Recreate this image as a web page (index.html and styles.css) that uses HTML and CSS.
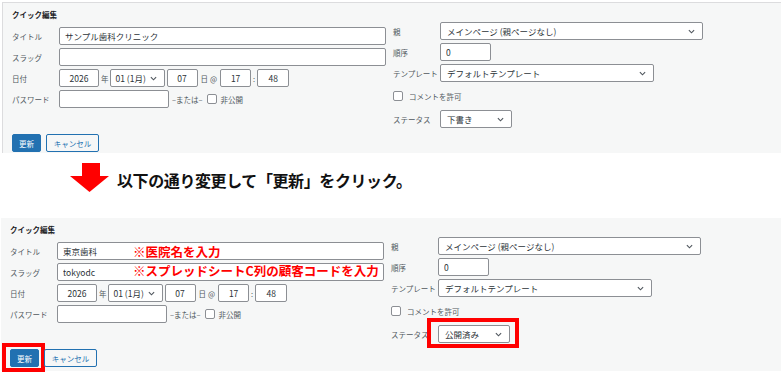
FILE: index.html
```html
<!DOCTYPE html>
<html lang="ja">
<head>
<meta charset="utf-8">
<title>クイック編集</title>
<link rel="stylesheet" href="styles.css">
</head>
<body>

<!-- 変更前 -->
<div class="qe">
  <div class="qe-cols">
    <div class="col-left">
      <h2 class="qe-title">クイック編集</h2>
      <div class="row"><span class="lbl">タイトル</span><input class="txt w-title" value="サンプル歯科クリニック"></div>
      <div class="row"><span class="lbl">スラッグ</span><input class="txt w-title" value=""></div>
      <div class="row">
        <span class="lbl">日付</span>
        <input class="txt num w-year" value="2026"><span class="unit u-year">年</span>
        <div class="sel w-month"><span>01 (1月)</span><svg class="chev" viewBox="0 0 8 5"><path d="M1 1l3 3 3-3"/></svg></div>
        <input class="txt num w-day" value="07"><span class="unit u-day">日</span><span class="unit u-at">@</span>
        <input class="txt num w-hour" value="17"><span class="unit u-colon">:</span>
        <input class="txt num w-min" value="48">
      </div>
      <div class="row">
        <span class="lbl">パスワード</span>
        <input class="txt w-pass" value=""><span class="unit u-or">–または–</span>
        <span class="cb"></span><span class="unit u-priv">非公開</span>
      </div>
    </div>
    <div class="col-right">
      <div class="row"><span class="lbl">親</span><div class="sel w-parent"><span>メインページ (親ページなし)</span><svg class="chev" viewBox="0 0 8 5"><path d="M1 1l3 3 3-3"/></svg></div></div>
      <div class="row"><span class="lbl">順序</span><input class="txt w-order" value="0"></div>
      <div class="row"><span class="lbl">テンプレート</span><div class="sel w-tpl"><span>デフォルトテンプレート</span><svg class="chev" viewBox="0 0 8 5"><path d="M1 1l3 3 3-3"/></svg></div></div>
      <div class="row row-cb"><span class="cb"></span><span class="unit u-comment">コメントを許可</span></div>
      <div class="row"><span class="lbl">ステータス</span><div class="sel w-status"><span>下書き</span><svg class="chev" viewBox="0 0 8 5"><path d="M1 1l3 3 3-3"/></svg></div></div>
    </div>
  </div>
  <div class="actions">
    <button class="btn btn-primary">更新</button>
    <button class="btn">キャンセル</button>
  </div>
</div>

<!-- 説明 -->
<div class="step">
  <svg class="arrow" viewBox="0 0 39 29"><polygon points="12,0 30,0 30,13 39,13 19.5,29 0,13 12,13"/></svg>
  <p class="step-text">以下の通り変更して「更新」をクリック。</p>
</div>

<!-- 変更後 -->
<div class="qe qe-after">
  <div class="qe-cols">
    <div class="col-left">
      <h2 class="qe-title">クイック編集</h2>
      <div class="row"><span class="lbl">タイトル</span><input class="txt w-title" value="東京歯科"><span class="note note-title">※医院名を入力</span></div>
      <div class="row"><span class="lbl">スラッグ</span><input class="txt w-title" value="tokyodc"><span class="note note-slug">※スプレッドシートC列の顧客コードを入力</span></div>
      <div class="row">
        <span class="lbl">日付</span>
        <input class="txt num w-year" value="2026"><span class="unit u-year">年</span>
        <div class="sel w-month"><span>01 (1月)</span><svg class="chev" viewBox="0 0 8 5"><path d="M1 1l3 3 3-3"/></svg></div>
        <input class="txt num w-day" value="07"><span class="unit u-day">日</span><span class="unit u-at">@</span>
        <input class="txt num w-hour" value="17"><span class="unit u-colon">:</span>
        <input class="txt num w-min" value="48">
      </div>
      <div class="row">
        <span class="lbl">パスワード</span>
        <input class="txt w-pass" value=""><span class="unit u-or">–または–</span>
        <span class="cb"></span><span class="unit u-priv">非公開</span>
      </div>
    </div>
    <div class="col-right">
      <div class="row"><span class="lbl">親</span><div class="sel w-parent"><span>メインページ (親ページなし)</span><svg class="chev" viewBox="0 0 8 5"><path d="M1 1l3 3 3-3"/></svg></div></div>
      <div class="row"><span class="lbl">順序</span><input class="txt w-order" value="0"></div>
      <div class="row"><span class="lbl">テンプレート</span><div class="sel w-tpl"><span>デフォルトテンプレート</span><svg class="chev" viewBox="0 0 8 5"><path d="M1 1l3 3 3-3"/></svg></div></div>
      <div class="row row-cb"><span class="cb"></span><span class="unit u-comment">コメントを許可</span></div>
      <div class="row"><span class="lbl">ステータス</span><div class="sel w-status"><span>公開済み</span><svg class="chev" viewBox="0 0 8 5"><path d="M1 1l3 3 3-3"/></svg><span class="mark mark-status"></span></div></div>
    </div>
  </div>
  <div class="actions">
    <button class="btn btn-primary">更新<span class="mark mark-btn"></span></button>
    <button class="btn">キャンセル</button>
  </div>
</div>

</body>
</html>
```

FILE: styles.css
```css
* {box-sizing:border-box;}
body {margin:0;background:#fff;font-family:"Noto Sans CJK JP","Noto Sans",sans-serif;color:#2c3338;width:781px;height:378px;overflow:hidden;}

.qe {margin:2px 0 0 2px;background:#f6f7f7;border-top:1px solid #dcdcde;border-left:1px solid #dcdcde;padding:6px 0 1px 9px;}
.qe-after {margin:0 0 0 1px;border-top:0;border-left:0;padding:6px 0 4px 9px;}

.qe-cols {display:flex;gap:7px;}
.col-left {width:374px;display:flex;flex-direction:column;gap:3px;}
.col-right {display:flex;flex-direction:column;gap:3px;padding-top:13px;}

.qe-title {margin:0 0 3px;font-size:7.5px;line-height:12px;font-weight:bold;color:#1d2327;}

.row {display:flex;align-items:center;height:18px;position:relative;}
.row-cb {height:22px;}
.lbl {width:47px;flex:none;font-size:7.5px;color:#50575e;white-space:nowrap;}

.txt {height:18px;border:1px solid #8c8f94;border-radius:2px;background:#fff;font:8.5px "Noto Sans CJK JP","Noto Sans",sans-serif;color:#2c3338;padding:0 5px;outline:none;}
.num {text-align:center;}
.w-title {width:327px;}
.w-year {width:40px;}
.w-day {width:31px;margin-left:2px;}
.w-hour {width:31px;margin-left:3px;}
.w-min {width:32px;}
.w-pass {width:110px;}
.w-order {width:51px;}

.sel {height:18px;border:1px solid #8c8f94;border-radius:2px;background:#fff;display:flex;align-items:center;justify-content:space-between;padding:0 7px 0 6px;font-size:8.5px;color:#2c3338;position:relative;}
.chev {width:7px;height:5px;fill:none;stroke:#50575e;stroke-width:1.3;}
.w-month {width:55px;padding-left:5px;}
.w-parent {width:263px;}
.w-tpl {width:214px;}
.w-status {width:72px;}

.unit {font-size:7.5px;color:#50575e;white-space:nowrap;}
.u-year {margin:0 1px 0 2px;}
.u-day {margin-left:3px;}
.u-at {margin-left:2px;}
.u-colon {margin:0 2px;}
.u-or {margin-left:3px;}
.u-priv {margin-left:4px;}
.u-comment {margin-left:6px;}

.cb {width:10px;height:10px;flex:none;border:1px solid #8c8f94;border-radius:2px;background:#fff;margin-left:4px;}
.row-cb .cb {margin-left:0;}

.actions {display:flex;gap:5px;margin-top:6px;}
.btn {height:18px;border:1px solid #2271b1;border-radius:2px;background:#f6f7f7;color:#2271b1;font:7.5px "Noto Sans CJK JP","Noto Sans",sans-serif;padding:0;width:53px;position:relative;}
.btn-primary {width:29px;background:#2271b1;color:#fff;}

.step {height:65px;display:flex;align-items:flex-start;padding:10px 0 0 70px;}
.arrow {width:39px;height:29px;fill:#ff0000;flex:none;}
.step-text {margin:7px 0 0 8px;font-size:16px;line-height:20px;font-weight:bold;color:#111;letter-spacing:-0.4px;}

.note {position:absolute;color:#ff0000;font-weight:bold;font-size:12.5px;line-height:14px;white-space:nowrap;}
.note-title {left:123px;top:3px;}
.note-slug {left:123px;top:1px;}

.mark {position:absolute;border:4px solid #ff0000;pointer-events:none;}
.mark-btn {left:-9px;top:-7px;width:43px;height:29px;}
.mark-status {left:-12px;top:-8px;width:92px;height:30px;}
```
